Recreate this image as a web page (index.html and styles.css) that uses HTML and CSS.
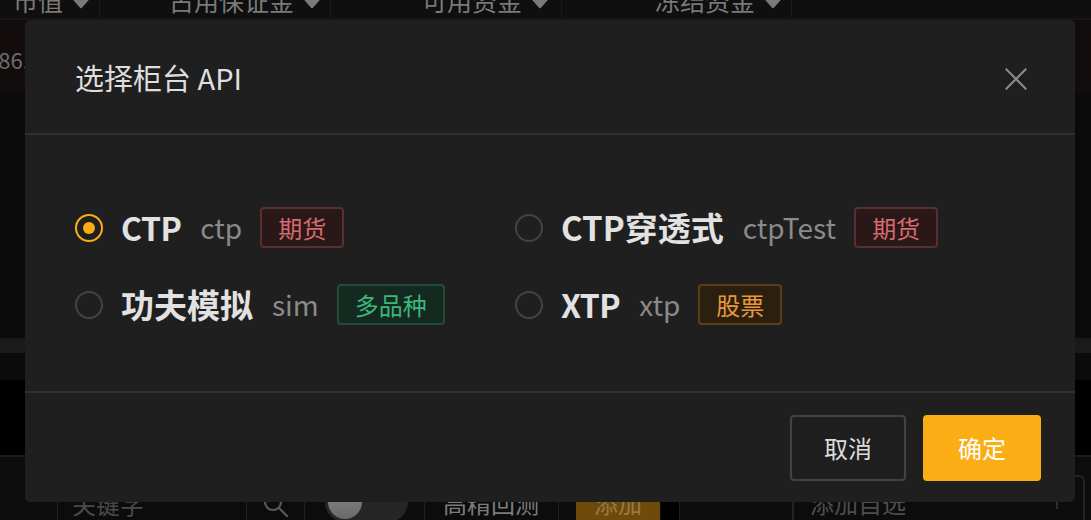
FILE: index.html
```html
<!DOCTYPE html>
<html lang="zh-CN">
<head>
<meta charset="utf-8">
<title>选择柜台 API</title>
<link rel="stylesheet" href="styles.css">
</head>
<body>
<div class="app">
  <div class="thead">
    <div class="th th-1">市值<svg class="caret" viewBox="0 0 18 12"><path d="M2 2h14L9 10z" fill="#7a7a7a" stroke="#7a7a7a" stroke-width="2.5" stroke-linejoin="round"/></svg></div>
    <div class="th th-2">占用保证金<svg class="caret" viewBox="0 0 18 12"><path d="M2 2h14L9 10z" fill="#7a7a7a" stroke="#7a7a7a" stroke-width="2.5" stroke-linejoin="round"/></svg></div>
    <div class="th th-3">可用资金<svg class="caret" viewBox="0 0 18 12"><path d="M2 2h14L9 10z" fill="#7a7a7a" stroke="#7a7a7a" stroke-width="2.5" stroke-linejoin="round"/></svg></div>
    <div class="th th-4">冻结资金<svg class="caret" viewBox="0 0 18 12"><path d="M2 2h14L9 10z" fill="#7a7a7a" stroke="#7a7a7a" stroke-width="2.5" stroke-linejoin="round"/></svg></div>
    <div class="th th-rest"></div>
  </div>
  <div class="trow"><span class="cell-num">386.42</span></div>
  <div class="tbody"></div>
  <div class="scrollbar"></div>
  <div class="tail"></div>
  <div class="void"></div>
  <div class="toolbar">
    <div class="tb-gap"></div>
    <div class="tb-input">关键字</div>
    <div class="tb-search">
      <svg viewBox="0 0 28 28" width="28" height="28"><circle cx="11" cy="11" r="8" fill="none" stroke="#5a5a5a" stroke-width="2.2"/><path d="M17 17l8 8" stroke="#5a5a5a" stroke-width="2.2" stroke-linecap="round"/></svg>
    </div>
    <div class="tb-toggle"><span class="switch"><span class="knob"></span></span></div>
    <div class="tb-text">高精回测</div>
    <div class="tb-btn-wrap"><span class="tb-btn">添加</span></div>
    <div class="tb-space"></div>
    <div class="tb-input2">添加自选<span class="tb-caret"></span></div>
  </div>
</div>

<div class="modal">
  <div class="modal-header">
    <div class="modal-title">选择柜台 API</div>
    <svg class="modal-close" viewBox="0 0 22 22" width="22" height="22"><path d="M1.5 1.5l19 19M20.5 1.5l-19 19" stroke="#8a8a8a" stroke-width="2.2" stroke-linecap="square"/></svg>
  </div>
  <div class="modal-body">
    <div class="options">
      <label class="option">
        <span class="radio checked"><span class="dot"></span></span>
        <span class="opt-name latin">CTP</span>
        <span class="opt-code">ctp</span>
        <span class="tag tag-red">期货</span>
      </label>
      <label class="option">
        <span class="radio"></span>
        <span class="opt-name">CTP穿透式</span>
        <span class="opt-code">ctpTest</span>
        <span class="tag tag-red">期货</span>
      </label>
      <label class="option">
        <span class="radio"></span>
        <span class="opt-name">功夫模拟</span>
        <span class="opt-code">sim</span>
        <span class="tag tag-green">多品种</span>
      </label>
      <label class="option">
        <span class="radio"></span>
        <span class="opt-name latin">XTP</span>
        <span class="opt-code">xtp</span>
        <span class="tag tag-orange">股票</span>
      </label>
    </div>
  </div>
  <div class="modal-footer">
    <button class="btn btn-default">取消</button>
    <button class="btn btn-primary">确定</button>
  </div>
</div>
</body>
</html>
```

FILE: styles.css
```css
* { box-sizing: border-box; }
html, body {
  margin: 0;
  padding: 0;
  width: 1091px;
  height: 520px;
  overflow: hidden;
  background: #000;
  font-family: "Noto Sans CJK SC", "Noto Sans", sans-serif;
}

.app {
  width: 1091px;
  height: 520px;
  display: flex;
  flex-direction: column;
}

/* table header (dimmed) */
.thead {
  height: 18px;
  flex: none;
  display: flex;
  align-items: flex-end;
  overflow: hidden;
  background: #0f0f0f;
}
.th {
  height: 18px;
  display: flex;
  align-items: flex-end;
  justify-content: flex-end;
  border-right: 1px solid #1b1b1b;
  color: #7a7a7a;
  font-size: 25px;
  line-height: 25px;
  padding-bottom: 5px;
  white-space: nowrap;
}
.th .caret { width: 18px; height: 12px; margin-left: 9px; margin-bottom: 4px; flex: none; }
.th-1 { width: 100px; padding-right: 9px; }
.th-2 { width: 231px; padding-right: 9px; }
.th-3 { width: 231px; padding-right: 12px; }
.th-4 { width: 230px; padding-right: 9px; }
.th-rest { flex: 1; border-right: none; }

.trow {
  height: 74px;
  flex: none;
  border-top: 2px solid #161616;
  background: #120c0c;
  display: flex;
  align-items: center;
  overflow: hidden;
}
.cell-num {
  margin-left: -14px;
  color: #6c6c6c;
  font-size: 22px;
  line-height: 22px;
  padding-top: 6px;
}
.tbody { height: 246px; flex: none; background: #0b0b0b; }
.scrollbar { height: 15px; flex: none; background: #1a1a1a; }
.tail { height: 27px; flex: none; background: #0b0b0b; }
.void { height: 77px; flex: none; background: #000; border-bottom: 2px solid #1a1a1a; }

.toolbar {
  flex: 1;
  background: #0c0c0c;
  display: flex;
  align-items: flex-end;
  color: #5a5a5a;
  font-size: 24px;
  overflow: hidden;
}
.tb-gap { width: 57px; height: 100%; }
.tb-input {
  width: 190px;
  height: 47px;
  border: 1px solid #222;
  border-bottom: none;
  padding: 18px 0 0 14px;
  color: #4a4a4a;
  line-height: 24px;
}
.tb-search {
  width: 58px;
  height: 47px;
  border-right: 1px solid #222;
  display: flex;
  justify-content: center;
  padding-top: 10px;
}
.tb-search svg { margin-top: 8px; }
.tb-toggle {
  width: 120px;
  height: 100%;
  border-right: 1px solid #1e1e1e;
  display: flex;
  align-items: flex-start;
  padding: 25px 0 0 20px;
}
.switch {
  flex: none;
  width: 83px;
  height: 40px;
  border-radius: 20px;
  background: #262626;
  display: flex;
  align-items: center;
  padding-left: 3px;
}
.knob {
  width: 34px;
  height: 34px;
  border-radius: 50%;
  background: linear-gradient(#8a8a8a, #6a6a6a);
}
.tb-text {
  width: 134px;
  height: 100%;
  border-right: 1px solid #1e1e1e;
  padding: 0 0 0 18px;
  display: flex;
  align-items: flex-end;
  color: #7c7c7c;
  line-height: 24px;
  padding-bottom: 5px;
}
.tb-btn-wrap {
  width: 121px;
  height: 100%;
  padding-left: 17px;
  display: flex;
  align-items: flex-end;
  border-right: 1px solid #1e1e1e;
  background: linear-gradient(to right, #0c0c0c 0 102px, #000 102px);
}
.tb-btn {
  width: 84px;
  height: 47px;
  background: #6e4a0b;
  color: #9a7a44;
  display: flex;
  justify-content: center;
  align-items: flex-end;
  line-height: 24px;
  padding-bottom: 5px;
}
.tb-space { width: 112px; height: 100%; }
.tb-input2 {
  width: 293px;
  height: 45px;
  border: 2px solid #232323;
  border-bottom: none;
  border-radius: 6px 6px 0 0;
  color: #4e4e4e;
  padding: 14px 0 0 16px;
  line-height: 24px;
  position: relative;
}
.tb-caret {
  position: absolute;
  right: 25px;
  top: 18px;
  width: 2px;
  height: 14px;
  background: #2e2e2e;
}

/* modal */
.modal {
  position: absolute;
  left: 25px;
  top: 20px;
  width: 1050px;
  height: 482px;
  background: #1f1f1f;
  border-radius: 5px;
  display: flex;
  flex-direction: column;
}
.modal-header {
  height: 115px;
  flex: none;
  border-bottom: 2px solid #2f2f2f;
  display: flex;
  align-items: center;
  justify-content: space-between;
  padding: 0 48px 0 50px;
}
.modal-title {
  color: #dedede;
  font-size: 29px;
  line-height: 40px;
}
.modal-close { margin-top: 5px; }

.modal-body {
  flex: 1;
  padding: 72px 50px 0;
}
.options {
  display: grid;
  grid-template-columns: 440px 1fr;
  row-gap: 36px;
}
.option {
  display: flex;
  align-items: center;
  height: 41px;
}
.radio {
  width: 28px;
  height: 28px;
  border-radius: 50%;
  border: 2px solid #434343;
  display: flex;
  align-items: center;
  justify-content: center;
  flex: none;
}
.radio.checked { border-color: #faad14; }
.radio .dot {
  width: 12px;
  height: 12px;
  border-radius: 50%;
  background: #faad14;
}
.opt-name {
  margin-left: 18px;
  color: #e2e2e2;
  font-size: 33px;
  font-weight: 700;
  line-height: 41px;
}
.opt-name.latin { font-size: 32px; letter-spacing: -0.5px; }
.opt-code {
  margin-left: 19px;
  color: #8a8a8a;
  font-size: 28px;
  line-height: 41px;
}
.tag {
  margin-left: 18px;
  height: 41px;
  padding: 0 16px;
  border: 2px solid;
  border-radius: 4px;
  font-size: 24px;
  line-height: 37px;
}
.tag-red { color: #d66a6c; background: #2a1819; border-color: #58302f; }
.tag-green { color: #3cb67c; background: #142a20; border-color: #1f4d37; }
.tag-orange { color: #e99a37; background: #2b1f10; border-color: #5d3f16; }

.modal-footer {
  height: 111px;
  flex: none;
  border-top: 2px solid #2f2f2f;
  display: flex;
  justify-content: flex-end;
  align-items: center;
  gap: 17px;
  padding: 0 34px 0 0;
}
.btn {
  height: 66px;
  border-radius: 4px;
  font-family: inherit;
  font-size: 24px;
  line-height: 1;
  padding: 0;
  cursor: pointer;
}
.btn-default {
  width: 116px;
  background: transparent;
  border: 2px solid #434343;
  color: #dcdcdc;
}
.btn-primary {
  width: 118px;
  background: #faad14;
  border: 2px solid #faad14;
  color: #fff;
}
```
